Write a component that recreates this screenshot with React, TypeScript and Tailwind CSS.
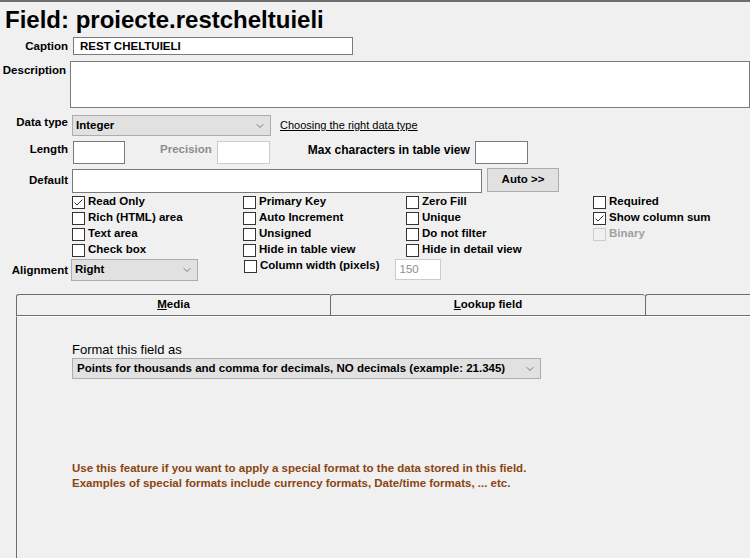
import { ChevronDown } from 'lucide-react';

function Box({ checked, disabled }: { checked?: boolean; disabled?: boolean }) {
  return (
    <span
      className={`w-[13px] h-[13px] shrink-0 border flex items-center justify-center ${
        disabled ? 'border-[#cccccc] bg-[#f0f0f0]' : 'border-[#333333] bg-white'
      }`}
    >
      {checked && (
        <svg width="11" height="11" viewBox="0 0 11 11">
          <path d="M1.5 5.5 L4 8 L9.5 2.5" fill="none" stroke="#333" strokeWidth="1" />
        </svg>
      )}
    </span>
  );
}

function Check({ label, checked, disabled }: { label: string; checked?: boolean; disabled?: boolean }) {
  return (
    <div className="flex items-center gap-[3px] h-[16px]">
      <Box checked={checked} disabled={disabled} />
      <span className={`font-bold ${disabled ? 'text-[#a0a0a0]' : 'text-black'}`}>{label}</span>
    </div>
  );
}

function Select({ value, className }: { value: string; className: string }) {
  return (
    <div
      className={`flex items-center justify-between bg-[#e1e1e1] border border-[#adadad] pl-[3px] pr-[4px] font-bold ${className}`}
    >
      <span>{value}</span>
      <ChevronDown className="w-[12px] h-[12px] text-[#555]" strokeWidth={1.5} />
    </div>
  );
}

export default function App() {
  const checks = [
    [{ label: 'Read Only', checked: true }, { label: 'Primary Key' }, { label: 'Zero Fill' }, { label: 'Required' }],
    [{ label: 'Rich (HTML) area' }, { label: 'Auto Increment' }, { label: 'Unique' }, { label: 'Show column sum', checked: true }],
    [{ label: 'Text area' }, { label: 'Unsigned' }, { label: 'Do not filter' }, { label: 'Binary', disabled: true }],
    [{ label: 'Check box' }, { label: 'Hide in table view' }, { label: 'Hide in detail view' }, null],
  ];

  return (
    <div
      className="w-[750px] h-[558px] overflow-hidden bg-[#f0f0f0] text-black text-[11.5px] border-t-2 border-[#6f6f6f]"
      style={{ fontFamily: '"Liberation Sans", Arial, sans-serif' }}
    >
      <h1 className="text-[24px] font-bold leading-[28px] pl-[5px] mt-[4px]">Field: proiecte.restcheltuieli</h1>

      {/* Caption */}
      <div className="flex items-center mt-[3px] h-[18px]">
        <div className="w-[68px] text-right font-bold mt-[1px]">Caption</div>
        <div className="ml-[5px] w-[280px] h-[18px] border border-[#7a7a7a] bg-white pl-[6px] font-bold leading-[17px]">
          REST CHELTUIELI
        </div>
      </div>

      {/* Description */}
      <div className="flex items-start mt-[6px]">
        <div className="w-[68px] text-right font-bold mt-[1px]">Description</div>
        <div className="ml-[4px] w-[700px] h-[47px] border border-[#7a7a7a] bg-white" />
      </div>

      {/* Data type */}
      <div className="flex items-center mt-[7px] h-[21px]">
        <div className="w-[68px] text-right font-bold -mt-[5px]">Data type</div>
        <Select value="Integer" className="ml-[4px] w-[199px] h-[21px]" />
        <span className="ml-[9px] underline text-[11px]">Choosing the right data type</span>
      </div>

      {/* Length row */}
      <div className="flex items-center mt-[5px] h-[23px]">
        <div className="w-[68px] text-right font-bold -mt-[5px]">Length</div>
        <div className="ml-[5px] w-[52px] h-[23px] border border-[#7a7a7a] bg-white" />
        <div className="ml-[35px] font-bold text-[#8d8d8d] -mt-[5px]">Precision</div>
        <div className="ml-[5px] w-[53px] h-[23px] border border-[#cccccc] bg-white" />
        <div className="ml-[38px] font-bold text-[12px] -mt-[5px]">Max characters in table view</div>
        <div className="ml-[5px] w-[53px] h-[23px] border border-[#7a7a7a] bg-white" />
      </div>

      {/* Default */}
      <div className="flex items-center mt-[5px] h-[24px]">
        <div className="w-[68px] text-right font-bold">Default</div>
        <div className="ml-[4px] w-[410px] h-[24px] border border-[#7a7a7a] bg-white" />
        <button className="ml-[5px] w-[72px] h-[24px] bg-[#e1e1e1] border border-[#adadad] font-bold -mt-[2px]">
          Auto &gt;&gt;
        </button>
      </div>

      {/* Checkboxes */}
      <div className="mt-[1px] ml-[72px] flex flex-col">
        {checks.map((row, i) => (
          <div key={i} className="grid grid-cols-[171px_163px_187px_1fr]">
            {row.map((c, j) => (c ? <Check key={j} {...c} /> : <div key={j} />))}
          </div>
        ))}
      </div>

      {/* Alignment */}
      <div className="flex items-start mt-[1px] h-[22px]">
        <div className="w-[68px] text-right font-bold mt-[3px]">Alignment</div>
        <Select value="Right" className="ml-[3px] w-[127px] h-[22px]" />
        <div className="ml-[46px] mt-[-1px]">
          <Check label="Column width (pixels)" />
        </div>
        <div className="ml-[16px] w-[46px] h-[21px] border border-[#cccccc] bg-white text-[#8d8d8d] pl-[3px] leading-[19px]">
          150
        </div>
      </div>

      {/* Tabs */}
      <div className="ml-[16px] mt-[13px] flex h-[22px] border-b border-[#6d6d6d]">
        <div className="w-[314px] shrink-0 border-t border-l border-[#6d6d6d] rounded-tl-[3px] flex items-center justify-center font-bold">
          <span>
            <span className="underline">M</span>edia
          </span>
        </div>
        <div className="w-[315px] shrink-0 border-t border-l border-[#6d6d6d] rounded-tl-[3px] rounded-tr-[3px] flex items-center justify-center font-bold">
          <span>
            <span className="underline">L</span>ookup field
          </span>
        </div>
        <div className="w-[200px] shrink-0 border-t border-l border-[#6d6d6d] rounded-tl-[3px]" />
      </div>
      <div className="ml-[16px] h-[300px] border-l border-[#6d6d6d] border-t border-t-white pl-[55px] pt-[26px]">
        <div className="text-[13px] leading-[14px]">Format this field as</div>
        <Select
          value="Points for thousands and comma for decimals, NO decimals (example: 21.345)"
          className="mt-[1px] w-[469px] h-[21px] pl-[4px]"
        />
        <div className="mt-[82px] text-[#8a4510] font-bold leading-[15px]">
          <div>Use this feature if you want to apply a special format to the data stored in this field.</div>
          <div>Examples of special formats include currency formats, Date/time formats, ... etc.</div>
        </div>
      </div>
    </div>
  );
}
